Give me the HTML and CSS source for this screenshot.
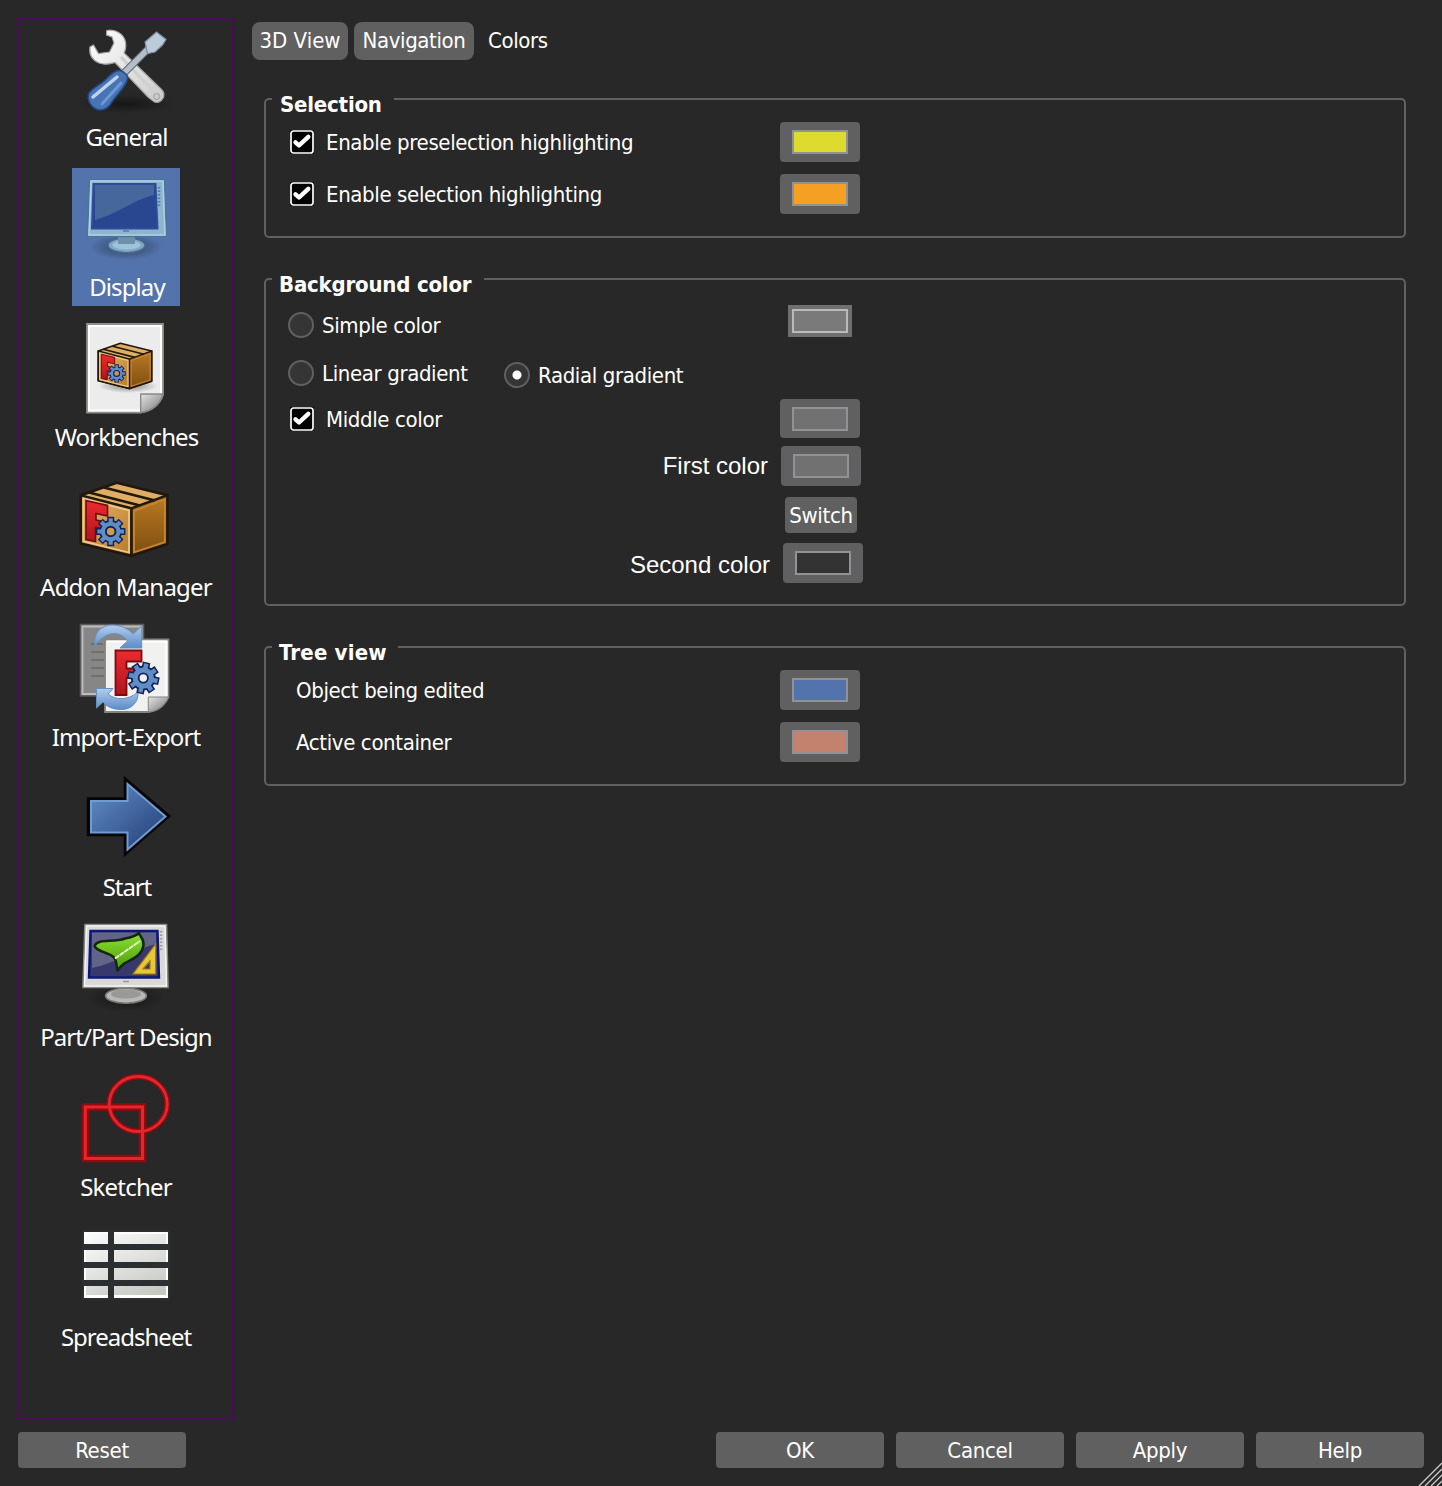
FILE: index.html
```html
<!DOCTYPE html>
<html lang="en">
<head>
<meta charset="utf-8">
<title>Preferences</title>
<link rel="stylesheet" href="styles.css">
</head>
<body>
<svg class="defs" width="0" height="0" aria-hidden="true">
  <defs>
    <linearGradient id="metal" x1="0" y1="0" x2="1" y2="1"><stop offset="0" stop-color="#fff"/><stop offset="1" stop-color="#c9c9c9"/></linearGradient>
    <linearGradient id="blue" x1="0" y1="0" x2="1" y2="1"><stop offset="0" stop-color="#6590c8"/><stop offset="1" stop-color="#1f3b74"/></linearGradient>
    <linearGradient id="sky" x1="0" y1="0" x2="0" y2="1"><stop offset="0" stop-color="#b3cdec"/><stop offset="1" stop-color="#5b8cca"/></linearGradient>
    <linearGradient id="front" x1="0" y1="0" x2="1" y2="1"><stop offset="0" stop-color="#e6b871"/><stop offset="1" stop-color="#b97a26"/></linearGradient>
    <linearGradient id="side" x1="0" y1="0" x2="0" y2="1"><stop offset="0" stop-color="#bb7a22"/><stop offset="1" stop-color="#7c4e12"/></linearGradient>
    <linearGradient id="red" x1="0" y1="0" x2="0" y2="1"><stop offset="0" stop-color="#ec2a2f"/><stop offset="1" stop-color="#b0151c"/></linearGradient>
    <linearGradient id="green" x1="0" y1="0" x2="0" y2="1"><stop offset="0" stop-color="#8ae234"/><stop offset="1" stop-color="#4c9a0a"/></linearGradient>
    <linearGradient id="cells" gradientUnits="userSpaceOnUse" x1="6" y1="12" x2="40" y2="90"><stop offset="0" stop-color="#fff"/><stop offset="1" stop-color="#c6c8c2"/></linearGradient>
    <linearGradient id="fold" x1="0" y1="0" x2="1" y2="1"><stop offset="0" stop-color="#e4e4e4"/><stop offset="1" stop-color="#777"/></linearGradient>
    <radialGradient id="shade"><stop offset="0" stop-color="#000" stop-opacity=".45"/><stop offset="1" stop-color="#000" stop-opacity="0"/></radialGradient>
    <g id="gear">
      <g stroke="#132456" stroke-width="7.600"><path d="M0-16V16M-16 0H16M-11.300-11.300 11.300 11.300M-11.300 11.300 11.300-11.300"/></g>
      <circle r="11.500" fill="#5f8dc8" stroke="#132456" stroke-width="1.800"/>
      <g stroke="#5f8dc8" stroke-width="4.400"><path d="M0-14.500V14.500M-14.500 0H14.500M-10.300-10.300 10.300 10.300M-10.300 10.300 10.300-10.300"/></g>
      <circle r="7.500" fill="#6490c8"/>
    </g>
    <g id="parcel">
      <path d="M3 25.300 38.700 12.700 89.300 25.300V74L53.300 85.700 3 73.300Z" fill="#e0ad66" stroke="#20180a" stroke-width="2.600" stroke-linejoin="round"/>
      <path d="M53.300 38.300 89.300 25.300V74L53.300 85.700Z" fill="url(#side)" stroke="#20180a" stroke-width="2.400"/>
      <path d="M56 41 86.800 29.500V72L56 82.300Z" fill="none" stroke="#c88632" stroke-width="1.800"/>
      <path d="M3 25.300 53.300 38.300V85.700L3 73.300Z" fill="url(#front)" stroke="#20180a" stroke-width="2.400"/>
      <path d="M5.300 28.500 51 40.500V82.500L5.300 71.300Z" fill="none" stroke="#edc98d" stroke-width="1.700"/>
      <path d="M11 22.500 62 35.500M26 17.500 77 30.500" fill="none" stroke="#20180a" stroke-width="2.600"/>
      <path d="M8 30.500 29.500 35.500V46L18 43.500V50L27 52V59L17.500 57.500V71.500L8 69.500Z" fill="url(#red)" stroke="#6e0d10" stroke-width="1.600"/>
      <use href="#gear" transform="translate(32.700 61.500) scale(.92)"/>
      <circle cx="32.700" cy="61.500" r="4.800" fill="#d09a50" stroke="#132456" stroke-width="2"/>
    </g>
    <g id="tick">
      <rect width="24" height="24" fill="#000"/>
      <rect x="1" y="1" width="22" height="22" rx="2.500" fill="#000" stroke="#fff" stroke-width="1.700"/>
      <path d="M5.500 12.300 9 15.500 18.300 6.800" fill="none" stroke="#fff" stroke-width="4.400" stroke-linecap="round" stroke-linejoin="round"/>
    </g>
  </defs>
</svg>

<div class="dialog">
  <div class="content">
    <nav class="sidebar">
      <div class="item">
        <svg class="icon" viewBox="0 0 96 96">
          <ellipse cx="48" cy="84" rx="48" ry="9" fill="url(#shade)"/>
          <path d="M28.700 10.500C38 9 46 14 47.500 22C48.500 28 47 31 46 33L84 70C89 76 83 84 76.500 82L70 77 37 42.500C33 43.500 28 45.500 21 43C14 40 11 34 12 27L15.500 25 20.500 33.500 31.500 32 36 23 34 17 28.500 15Z" fill="url(#metal)" stroke="#a5a5a5" stroke-width="1.200"/>
          <path d="M43 37 76 72" stroke="#cfcfcf" stroke-width="3"/>
          <circle cx="78.700" cy="76.500" r="3" fill="#ccc" stroke="#999"/>
          <path d="M45 54 70.500 28.500" stroke="#59636d" stroke-width="7.500"/>
          <path d="M45 54 71 28" stroke="#b3bcc7" stroke-width="5.500"/>
          <path d="M67 22 78.500 12 88 19.500 84.500 25 77 32 69.500 33.500Z" fill="#bccbda" stroke="#7f929f" stroke-width="1.200"/>
          <path d="M38.500 51C43 49 50 54 49.500 59C48 67 38 75 32 85C28 90 22 91 18 89C12 86 9 80 10.500 74C14 68 20 66 25 62C30 58 33 53 38.500 51Z" fill="#4774b6" stroke="#244a85" stroke-width="1.500"/>
          <path d="M15 77 39 57" stroke="#c0d3ee" stroke-width="3.500" stroke-linecap="round"/>
          <path d="M24 84 43 63" stroke="#6e97cf" stroke-width="3" stroke-linecap="round"/>
        </svg>
        <span class="name n-general">General</span>
      </div>
      <div class="item selected">
        <svg class="icon" viewBox="0 0 96 96">
          <ellipse cx="48" cy="77" rx="36" ry="13" fill="url(#shade)"/>
          <ellipse cx="48.500" cy="75.300" rx="18.500" ry="7.500" fill="#83a7c1" stroke="#456c8c" stroke-width="1.600"/>
          <ellipse cx="48.500" cy="75" rx="14" ry="4.500" fill="#9dc3da"/>
          <path d="M40 66H57V74H40Z" fill="#6f90aa"/>
          <path d="M11.500 9.500H86.500L88.500 66.500H9.500Z" fill="#8fb4ce" stroke="#47789a" stroke-width="1.600" stroke-linejoin="round"/>
          <path d="M13 11H85L87 65H11Z" fill="none" stroke="#aed0e5" stroke-width="1.500"/>
          <path d="M15.500 14H77.500L79.500 58.500H14Z" fill="#294690" stroke="#2b4e9a" stroke-width="2"/>
          <path d="M17 15H76V25C55 30 42 43 17 50Z" fill="#46679c"/>
          <path d="M81 17V37" stroke="#537b9c" stroke-width="2.500" stroke-dasharray="1.500 2"/>
          <path d="M45 61H51" stroke="#557b98" stroke-width="1.500"/>
        </svg>
        <span class="name n-display">Display</span>
      </div>
      <div class="item">
        <svg class="icon" viewBox="0 0 96 96">
          <path d="M9 4H85V75C82 84 74 91 62.700 92.500H9Z" fill="#ececec" stroke="#8f8f8c" stroke-width="1.800"/>
          <path d="M11 6H83V74H63V90.500H11Z" fill="none" stroke="#fff" stroke-width="1.800"/>
          <path d="M62.700 92.500V74H85C82 84 74 91 62.700 92.500Z" fill="url(#fold)" stroke="#858585" stroke-width="1.300"/>
          <ellipse cx="50" cy="66" rx="30" ry="7" fill="url(#shade)"/>
          <use href="#parcel" transform="translate(18.400 15.400) scale(.619)"/>
        </svg>
        <span class="name n-work">Workbenches</span>
      </div>
      <div class="item">
        <svg class="icon" viewBox="0 0 96 96"><use href="#parcel"/></svg>
        <span class="name n-addon">Addon Manager</span>
      </div>
      <div class="item">
        <svg class="icon" viewBox="0 0 96 96">
          <path d="M2.500 4.500H65.500V76H2.500Z" fill="#868686" stroke="#5b5b5b" stroke-width="1.600"/>
          <path d="M4.500 6.500H63.500V74H4.500Z" fill="none" stroke="#bdbdbd" stroke-width="1.800"/>
          <path d="M13 24H25M13 32H26M13 40H26M13 48H26M13 56H26" stroke="#707070" stroke-width="2"/>
          <path d="M27 19.500H90.500V77C87 85 80 91 70.300 92H27Z" fill="#f1f1f0" stroke="#83837f" stroke-width="1.800"/>
          <path d="M29 21.500H88.500V76" fill="none" stroke="#fff" stroke-width="1.800"/>
          <path d="M70.300 92V77H90.500C87 85 80 91 70.300 92Z" fill="url(#fold)" stroke="#858585"/>
          <path d="M17 26C15 12 24 5 34 5C43 5 51 9 55 14L63.700 6V28H42L49.500 21C42 10 27 11 17 26Z" fill="url(#sky)" stroke="#6690c0"/>
          <path d="M18.500 68.500H35L30 74C38 81 51 80 60 72C61 82 53 90 43 89.500C34 89.500 28 86 25 82L18.500 88Z" fill="url(#sky)" stroke="#6690c0"/>
          <path d="M37.500 30.500H63.500V41.500H48.500V48.500H57.500V58H48.500V75H37.500Z" fill="url(#red)" stroke="#7c0b10" stroke-width="1.800"/>
          <use href="#gear" transform="translate(65.300 58) rotate(12)"/>
          <circle cx="65.300" cy="58" r="4.600" fill="#f2f2f2" stroke="#132456" stroke-width="1.800"/>
        </svg>
        <span class="name n-import">Import-Export</span>
      </div>
      <div class="item">
        <svg class="icon" viewBox="0 0 96 96">
          <path d="M10.500 29H47.500V9.500L90.500 46 47.500 83.500V64.500H10.500Z" fill="#050505" stroke="#050505" stroke-width="3.500"/>
          <path d="M13 31H49.500V14L87.500 46.500 49.500 79.500V62.500H13Z" fill="url(#blue)" stroke="#6f9cd3" stroke-width="2"/>
        </svg>
        <span class="name n-start">Start</span>
      </div>
      <div class="item">
        <svg class="icon" viewBox="0 0 96 96">
          <ellipse cx="48" cy="78" rx="40" ry="14" fill="url(#shade)"/>
          <ellipse cx="48" cy="75.700" rx="20.500" ry="7.500" fill="#b8b9b6" stroke="#767774" stroke-width="1.600"/>
          <ellipse cx="48" cy="74" rx="15" ry="4.500" fill="#999a96"/>
          <path d="M7 4.500H88.500L90 67.500H5Z" fill="#d9dad7" stroke="#888985" stroke-width="1.700" stroke-linejoin="round"/>
          <path d="M8.500 6H87L88.500 66H6.500Z" fill="none" stroke="#f5f5f3" stroke-width="1.500"/>
          <path d="M12.500 11H79.500L81 57.500H11Z" fill="#37396e" stroke="#0d1779" stroke-width="2.400"/>
          <path d="M14 12.500H78V24C57 29 39 43 14 48Z" fill="#626488"/>
          <path d="M83 11V32" stroke="#9b9c98" stroke-width="2.500" stroke-dasharray="1.500 2"/>
          <path d="M45 61.500H51" stroke="#999" stroke-width="1.500"/>
          <path d="M16.500 26C20 18 35 23 47 18.500C55 17 59 15 61 13C62 17 66 18 65.500 25C64 36 54 39 47 43C43 46 41 48 39.500 50.500C38 45 39 40 35.500 37C30 32 19 32 16.500 26Z" fill="url(#green)" stroke="#16260a" stroke-width="2.500" stroke-linejoin="round"/>
          <path d="M37 38.500 62 21" stroke="#eaffcf" stroke-width="1.900" stroke-dasharray="5 .7"/>
          <path d="M77.700 24V54H55ZM72 41 65 49H72Z" fill="#e6c63b" fill-rule="evenodd" stroke="#a27d09" stroke-width="1.200"/>
        </svg>
        <span class="name n-part">Part/Part Design</span>
      </div>
      <div class="item">
        <svg class="icon" viewBox="0 0 96 96" fill="none">
          <ellipse cx="60.300" cy="34" rx="29" ry="27.500" stroke="#97080e" stroke-width="5.800"/>
          <path d="M7.300 37H64.500V88.500H7.300Z" stroke="#97080e" stroke-width="7.500"/>
          <path d="M7.300 37H64.500V88.500H7.300Z" stroke="#e2282d" stroke-width="3"/>
          <ellipse cx="60.300" cy="34" rx="29" ry="27.500" stroke="#e2282d" stroke-width="2.800"/>
        </svg>
        <span class="name n-sketch">Sketcher</span>
      </div>
      <div class="item">
        <svg class="icon" viewBox="0 0 96 96">
          <path d="M4 10H92V80H4Z" fill="#2b2f32"/>
          <path d="M6 12H30V24H6ZM36 12H90V24H36ZM6 30H30V42H6ZM36 30H90V42H36ZM6 48H30V60H6ZM36 48H90V60H36ZM6 66H30V78H6ZM36 66H90V78H36Z" fill="#fff"/>
          <path d="M8 14H30V24H8ZM36 14H88V24H36ZM8 30H30V42H8ZM36 30H88V42H36ZM8 48H30V60H8ZM36 48H88V60H36ZM8 66H30V75H8ZM36 66H88V75H36Z" fill="url(#cells)"/>
        </svg>
        <span class="name n-sheet">Spreadsheet</span>
      </div>
    </nav>

    <main class="main">
      <div class="tabs">
        <span class="tab t-view">3D View</span>
        <span class="tab t-nav">Navigation</span>
        <span class="tab current">Colors</span>
      </div>

      <section class="group selection">
        <h2 class="legend">Selection</h2>
        <div class="row">
          <label class="option check"><svg class="box" viewBox="0 0 24 24"><use href="#tick"/></svg><span class="text">Enable preselection highlighting</span></label>
          <span class="color"><i class="swatch yellow"></i></span>
        </div>
        <div class="row">
          <label class="option check"><svg class="box" viewBox="0 0 24 24"><use href="#tick"/></svg><span class="text">Enable selection highlighting</span></label>
          <span class="color"><i class="swatch orange"></i></span>
        </div>
      </section>

      <section class="group background">
        <h2 class="legend">Background color</h2>
        <div class="row simple">
          <label class="option"><i class="radio"></i><span class="text">Simple color</span></label>
          <span class="color flat"><i class="swatch light"></i></span>
        </div>
        <div class="row gradients">
          <label class="option linear"><i class="radio"></i><span class="text">Linear gradient</span></label>
          <label class="option radial"><i class="radio on"></i><span class="text">Radial gradient</span></label>
        </div>
        <div class="row middle">
          <label class="option check"><svg class="box" viewBox="0 0 24 24"><use href="#tick"/></svg><span class="text">Middle color</span></label>
          <span class="color"><i class="swatch gray"></i></span>
        </div>
        <div class="row first">
          <span class="caption">First color</span>
          <span class="color"><i class="swatch gray"></i></span>
        </div>
        <button class="button switch">Switch</button>
        <div class="row second">
          <span class="caption">Second color</span>
          <span class="color"><i class="swatch dark"></i></span>
        </div>
      </section>

      <section class="group tree">
        <h2 class="legend">Tree view</h2>
        <div class="row">
          <span class="option plain"><span class="text">Object being edited</span></span>
          <span class="color"><i class="swatch blue"></i></span>
        </div>
        <div class="row">
          <span class="option plain"><span class="text">Active container</span></span>
          <span class="color"><i class="swatch salmon"></i></span>
        </div>
      </section>
    </main>
  </div>

  <footer class="footer">
    <button class="button reset">Reset</button>
    <button class="button">OK</button>
    <button class="button">Cancel</button>
    <button class="button">Apply</button>
    <button class="button">Help</button>
  </footer>
  <svg class="grip" viewBox="0 0 24 24"><path d="M1 24 24 1M7 24 24 7M13 24 24 13M19 24 24 19"/></svg>
</div>
</body>
</html>
```
FILE: styles.css
```css
* { box-sizing: border-box; }

body {
  margin: 0;
  background: #282828;
  color: #fff;
  font: 22px/28px "DejaVu Sans Condensed", "Noto Sans", sans-serif;
  letter-spacing: -0.37px;
}

.defs { position: absolute; }

.dialog {
  position: relative;
  width: 1442px;
  height: 1486px;
  padding: 18px;
  display: flex;
  flex-direction: column;
  gap: 12px;
  overflow: hidden;
  white-space: nowrap;
}

.content { display: flex; gap: 18px; height: 1402px; }

/* category list */
.sidebar {
  width: 216px;
  box-shadow: inset 0 0 0 2px #4b0a5a;
  display: flex;
  flex-direction: column;
  align-items: center;
  gap: 12px;
}

.item {
  min-width: 108px;
  height: 138px;
  padding-top: 2px;
  display: flex;
  flex-direction: column;
  align-items: center;
}

.item.selected { background: #5373ac; }

.icon { width: 96px; height: 96px; flex: none; }

.name {
  margin-top: 5px;
  padding-left: 1px;
  font: 24px/32px "Noto Sans", sans-serif;
  letter-spacing: -0.9px;
}

.n-display { padding-left: 2px; }
.n-addon { letter-spacing: -0.8px; padding-left: 0; }
.n-sketch { letter-spacing: -0.8px; padding-left: 0; }
.n-sheet { letter-spacing: -1px; padding-left: 0; }
.n-part { letter-spacing: -0.95px; padding-left: 0; }
.n-start { letter-spacing: -1.1px; padding-left: 2px; }
.n-import { padding-left: 0; }

/* right pane */
.main { flex: 1; padding-top: 4px; }

.tabs { display: flex; gap: 6px; height: 38px; }

.tab {
  height: 38px;
  line-height: 38px;
  text-align: center;
  background: #606060;
  border-radius: 8px;
}

.t-view { width: 96px; letter-spacing: 0; }
.t-nav { width: 120px; }
.tab.current { background: none; padding-left: 8px; }

.group {
  width: 1142px;
  margin-left: 12px;
  border: 2px solid #606060;
  border-radius: 5px;
}

.selection { height: 140px; margin-top: 38px; }
.background { height: 328px; margin-top: 40px; }
.tree { height: 140px; margin-top: 40px; }

.legend {
  width: 122px;
  height: 24px;
  margin: -8px 0 6px 6px;
  padding-left: 8px;
  background: #282828;
  font-size: 22px;
  line-height: 25px;
  letter-spacing: -0.2px;
}

.background .legend { width: 212px; padding-left: 7px; }
.tree .legend { width: 126px; padding-left: 7px; letter-spacing: 0.2px; }

.row { display: flex; align-items: flex-start; height: 40px; }
.row + .row { margin-top: 12px; }

.option {
  width: 514px;
  padding-left: 22px;
  height: 40px;
  display: flex;
  align-items: center;
  gap: 8px;
}

.option.check { padding-left: 24px; gap: 12px; }
.option.plain { padding-left: 30px; }
.text { padding-top: 2px; }

.box { width: 24px; height: 24px; flex: none; }

.radio {
  width: 26px;
  height: 26px;
  flex: none;
  border: 2px solid #606060;
  border-radius: 50%;
  background: #353535;
}

.radio.on { background: radial-gradient(circle, #fff 4px, #353535 5px); }

.color {
  width: 80px;
  height: 40px;
  padding: 8px 12px;
  border-radius: 4px;
  background: #606060;
}

.color.flat {
  width: 64px;
  height: 32px;
  margin-left: 8px;
  padding: 4px;
  border-radius: 0;
  background: #6f6f6f;
}

.swatch { display: block; width: 56px; height: 24px; border: 2px solid #919196; }
.yellow { background: #dedb2f; }
.orange { background: #f5a023; }
.light { background: #7a7a7a; border-color: #bababa; }
.gray { background: #717171; }
.dark { background: #333; }
.blue { background: #5373ac; }
.salmon { background: #c3826d; }

.background .row + .row { margin-top: 0; }
.background .simple { height: 48px; padding-top: 3px; }
.background .gradients { height: 46px; }
.gradients .option { height: 46px; }
.gradients .linear { width: 216px; }
.gradients .radial { padding-top: 4px; }
.background .middle { height: 50px; padding-top: 3px; }
.middle .color { height: 39px; }
.background .first { height: 51px; }
.background .second { height: 40px; }

.caption {
  width: 515px;
  padding-right: 13px;
  text-align: right;
  font: 24px/40px "Liberation Sans", Arial, sans-serif;
  letter-spacing: 0;
}

.second .caption { width: 517px; line-height: 44px; }

.button {
  width: 168px;
  height: 36px;
  padding: 2px 0 0;
  border: 0;
  border-radius: 4px;
  background: #606060;
  color: #fff;
  font: inherit;
  letter-spacing: -0.3px;
  line-height: 34px;
}

.switch { display: block; width: 72px; margin: 0 0 10px 519px; }

.footer { display: flex; gap: 12px; }
.reset { margin-right: auto; }

.grip { position: absolute; right: 0; bottom: 0; width: 24px; height: 24px; }
.grip path { fill: none; stroke: #c8c8c8; stroke-width: 1.4; }
```
